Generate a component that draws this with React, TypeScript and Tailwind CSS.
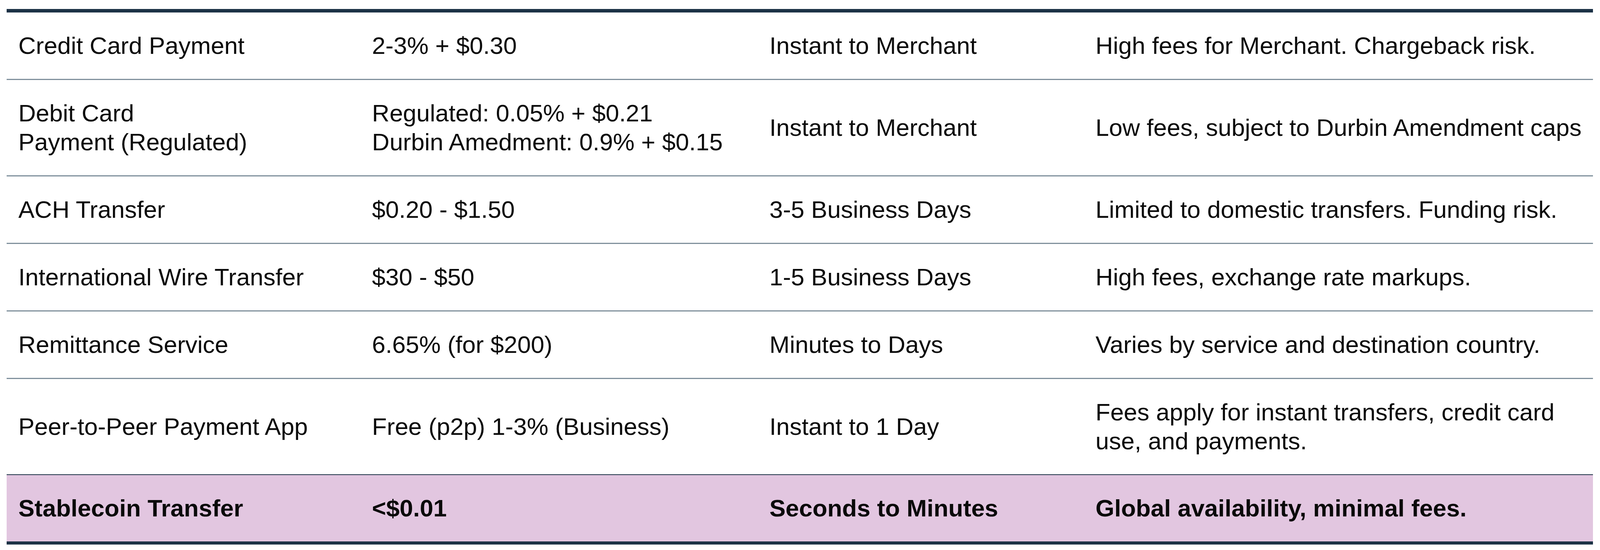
import React from "react";

type Row = { c: React.ReactNode[]; highlight?: boolean };

const rows: Row[] = [
  { c: ["Credit Card Payment", "2-3% + $0.30", "Instant to Merchant", "High fees for Merchant. Chargeback risk."] },
  {
    c: [
      <>Debit Card<br />Payment (Regulated)</>,
      <>Regulated: 0.05% + $0.21<br />Durbin Amedment: 0.9% + $0.15</>,
      "Instant to Merchant",
      "Low fees, subject to Durbin Amendment caps",
    ],
  },
  { c: ["ACH Transfer", "$0.20 - $1.50", "3-5 Business Days", "Limited to domestic transfers. Funding risk."] },
  { c: ["International Wire Transfer", "$30 - $50", "1-5 Business Days", "High fees, exchange rate markups."] },
  { c: ["Remittance Service", "6.65% (for $200)", "Minutes to Days", "Varies by service and destination country."] },
  {
    c: [
      "Peer-to-Peer Payment App",
      "Free (p2p) 1-3% (Business)",
      "Instant to 1 Day",
      <>Fees apply for instant transfers, credit card<br />use, and payments.</>,
    ],
  },
  { c: ["Stablecoin Transfer", "<$0.01", "Seconds to Minutes", "Global availability, minimal fees."], highlight: true },
];

export default function App() {
  return (
    <div
      className="w-full min-h-[1409px] bg-white pt-[23px] pl-[17px] pr-[18px]"
      style={{ fontFamily: '"Liberation Sans", Arial, sans-serif' }}
    >
      <div className="w-full border-t-[9px] border-b-[8px] border-[#1c3246] flex flex-col">
        {rows.map((r, i) => {
          const isLastPlain = i === rows.length - 2;
          const isHighlight = !!r.highlight;
          const borderCls = isHighlight
            ? ""
            : isLastPlain
            ? "border-b-[2px] border-[#1c3246]"
            : "border-b-[3px] border-[#7f909c]";
          return (
            <div
              key={i}
              className={`grid grid-cols-[962fr_1081fr_887fr_1385fr] ${borderCls} ${isHighlight ? "bg-[#e2c6e0] font-bold" : ""}`}
            >
              {r.c.map((cell, j) => (
                <div
                  key={j}
                  className="pl-[30px] py-[48px] text-[62px] leading-[74px] text-[#0a0a0a] whitespace-nowrap flex items-center min-w-0"
                >
                  <div>{cell}</div>
                </div>
              ))}
            </div>
          );
        })}
      </div>
    </div>
  );
}
